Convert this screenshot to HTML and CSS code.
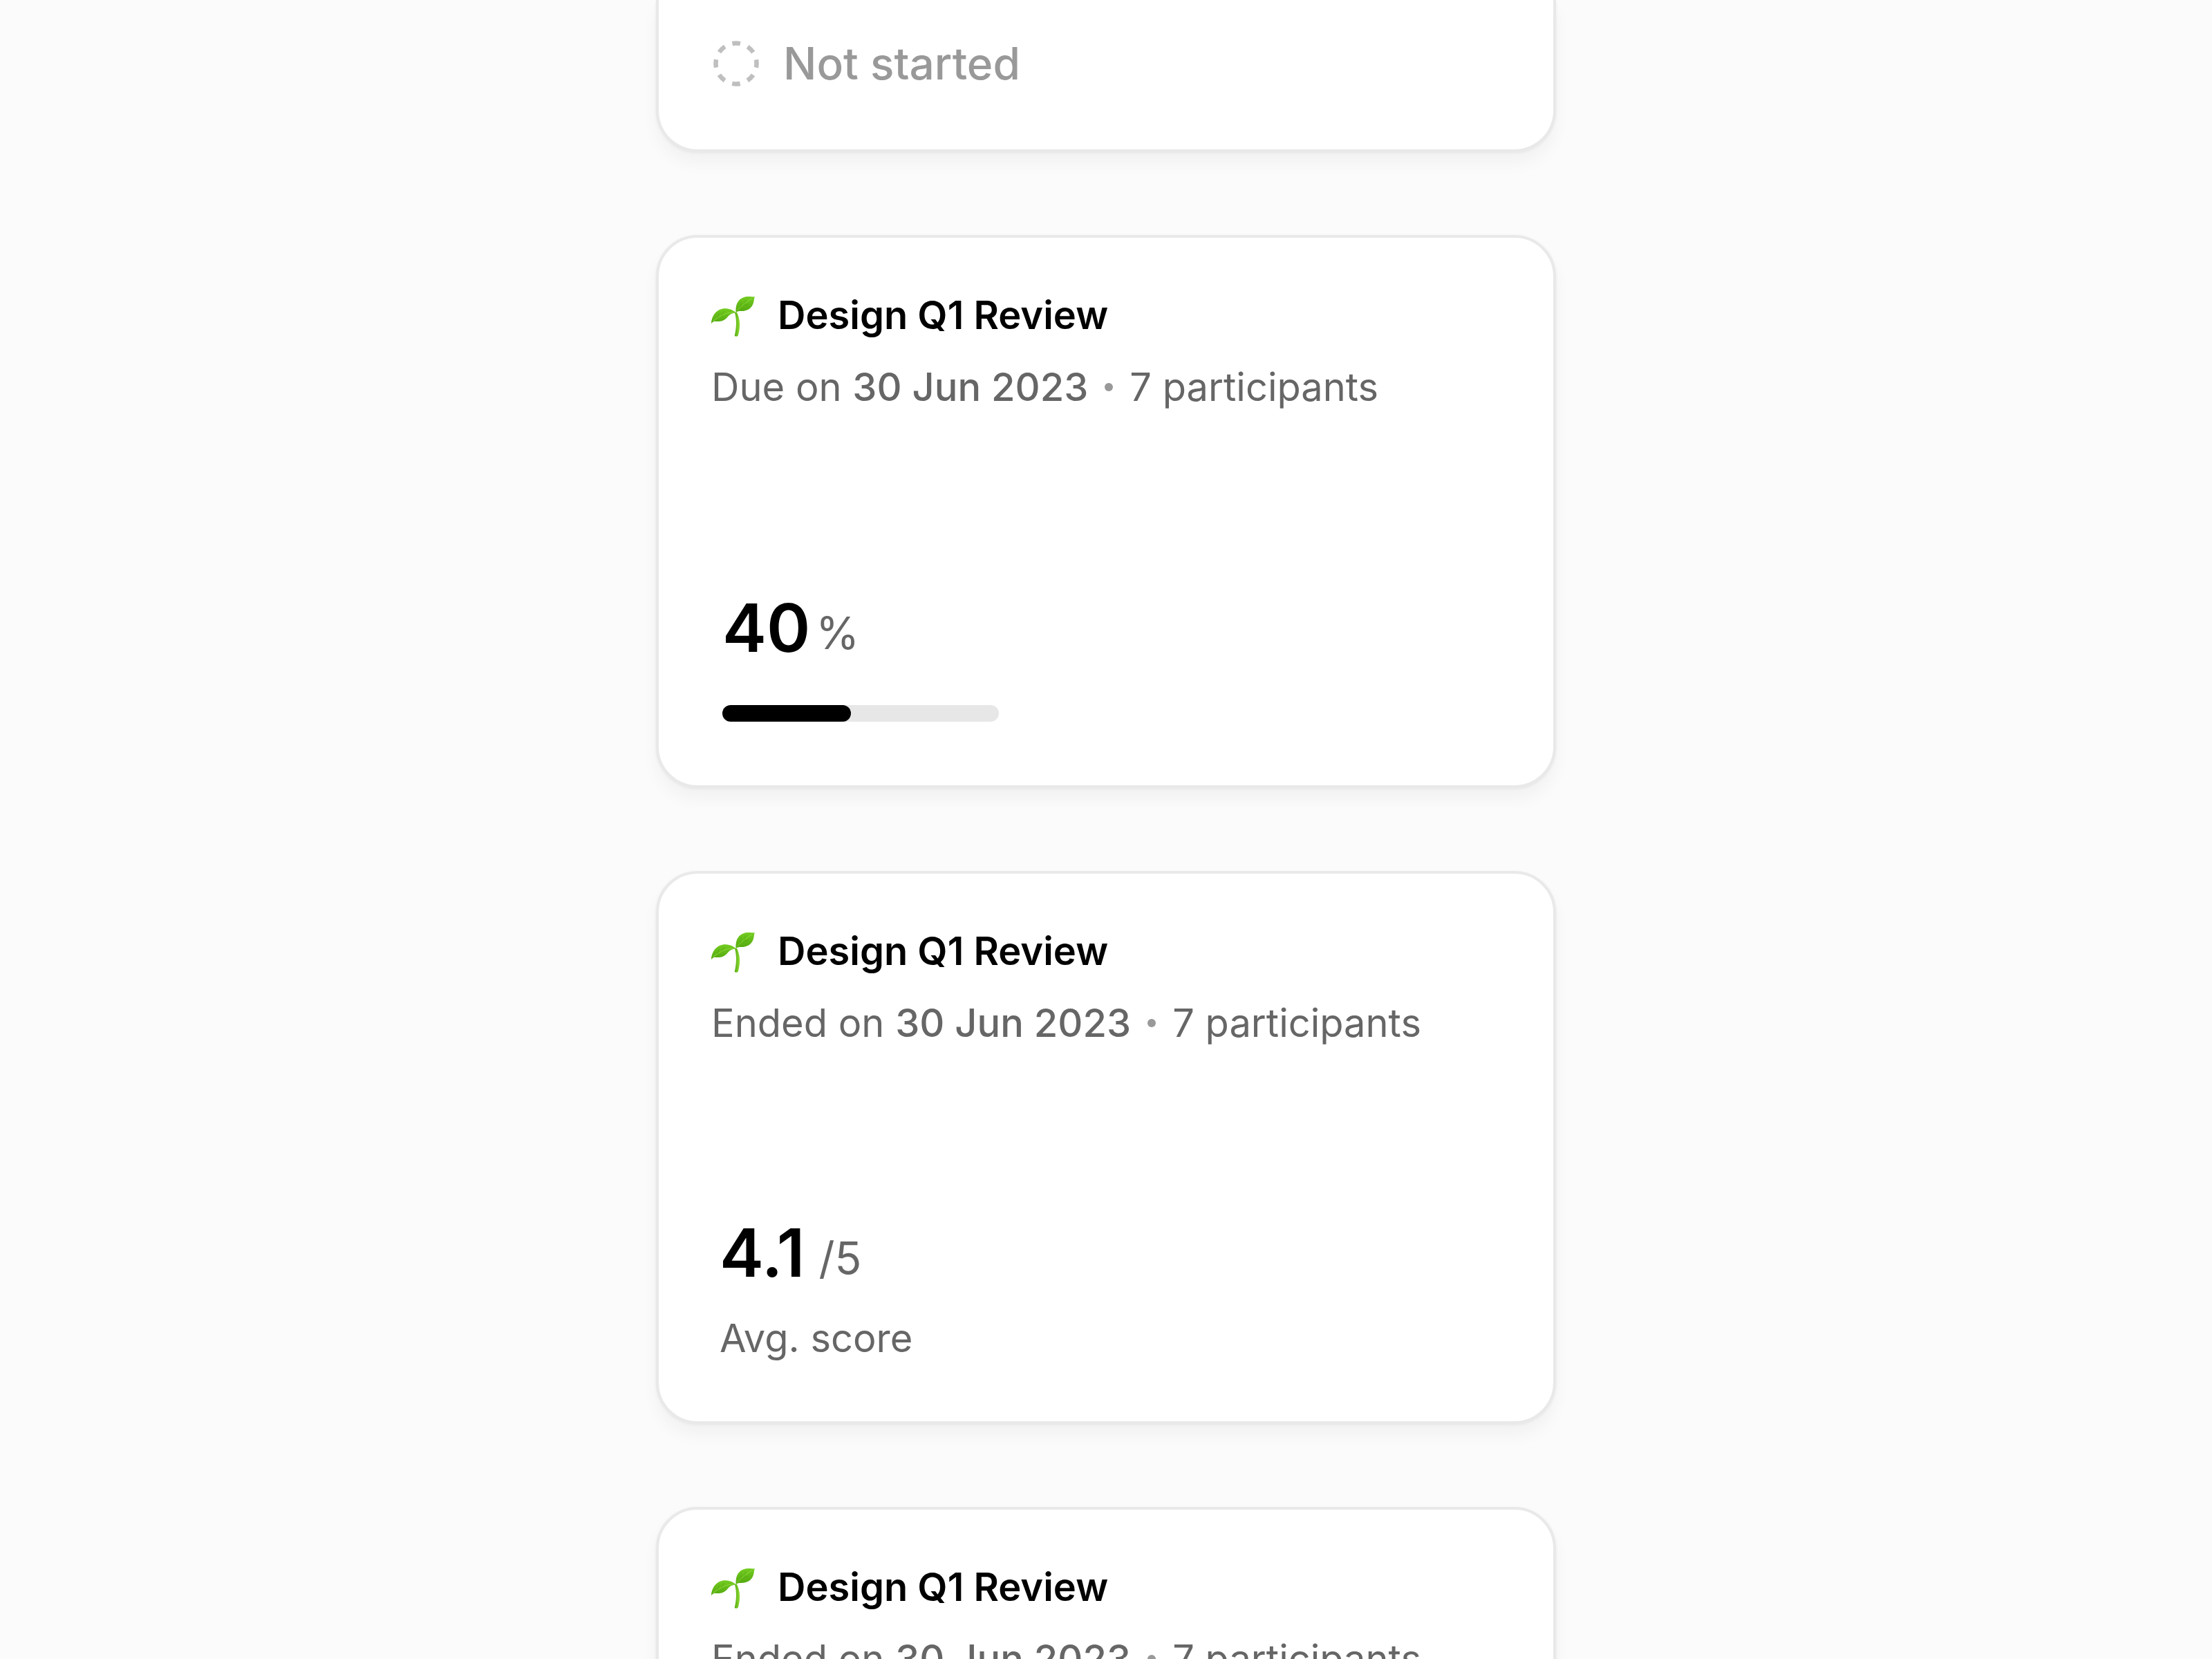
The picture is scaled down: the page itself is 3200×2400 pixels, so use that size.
FILE: index.html
```html
<!DOCTYPE html>
<html lang="en">
<head>
    <meta charset="UTF-8" />
    <meta name="viewport" content="width=device-width, initial-scale=1" />
    <title>Reviews</title>
    <link rel="stylesheet" href="styles.css">
</head>
<body>
    <!-- shared sprout icon -->
    <svg class="sprite" aria-hidden="true">
        <defs>
            <linearGradient id="leaf" x1="0" y1="0" x2="0" y2="1">
                <stop offset="0" stop-color="#74cc22" />
                <stop offset="1" stop-color="#52a80e" />
            </linearGradient>
            <linearGradient id="stem" x1="0" y1="0" x2="1" y2="0">
                <stop offset="0" stop-color="#55a810" />
                <stop offset="1" stop-color="#8fdd34" />
            </linearGradient>
        </defs>
        <symbol id="sprout" viewBox="84 88 192 178">
            <path d="M186 160L195 158C203 176 209 196 207 222C206 238 203 250 200 260Q193 266 185 261C192 232 196 196 186 160Z" fill="url(#stem)" />
            <path d="M84 207C86 168 112 141 146 142C166 143 182 151 192 161C174 160 164 167 154 179C138 198 118 200 98 197C92 199 88 202 84 207Z" fill="url(#leaf)" />
            <path d="M191 159C187 112 212 90 246 90C257 90 265 92 273 91C269 97 270 105 268 113C262 141 240 153 214 153C204 153 197 154 191 159Z" fill="url(#leaf)" />
            <path d="M92 195C112 184 134 160 182 158M196 150C212 134 234 114 262 98" fill="none" stroke="#8fdc3c" stroke-width="3" />
            <path d="M112 182L118 160M130 172L140 152M212 136L214 112M228 122L234 102M222 128L246 124" fill="none" stroke="#3f8f0a" stroke-width="2" opacity=".5" />
        </symbol>
    </svg>

    <main class="list">
        <section class="card card-first">
            <p class="status">
                <svg class="status-icon" viewBox="0 0 72 72" aria-hidden="true">
                    <circle cx="36" cy="36" r="29.5" fill="none" stroke="#bfbfbf" stroke-width="6.5" stroke-dasharray="11.58 11.58" stroke-dashoffset="5.79" />
                </svg>
                Not started
            </p>
        </section>

        <section class="card">
            <h2 class="title"><svg class="sprout" aria-hidden="true"><use href="#sprout" /></svg>Design Q1 Review</h2>
            <p class="meta"><span>Due on <b>30 Jun 2023</b></span><i class="dot"></i><span>7 participants</span></p>
            <div class="result progress">
                <p class="score">40<span class="unit">%</span></p>
                <div class="bar" role="progressbar" aria-label="Progress" aria-valuenow="40" aria-valuemin="0" aria-valuemax="100"><div class="fill"></div></div>
            </div>
        </section>

        <section class="card">
            <h2 class="title"><svg class="sprout" aria-hidden="true"><use href="#sprout" /></svg>Design Q1 Review</h2>
            <p class="meta"><span>Ended on <b>30 Jun 2023</b></span><i class="dot"></i><span>7 participants</span></p>
            <div class="result">
                <p class="score">4.1<span class="unit">/5</span></p>
                <p class="caption">Avg. score</p>
            </div>
        </section>

        <section class="card">
            <h2 class="title"><svg class="sprout" aria-hidden="true"><use href="#sprout" /></svg>Design Q1 Review</h2>
            <p class="meta"><span>Ended on <b>30 Jun 2023</b></span><i class="dot"></i><span>7 participants</span></p>
        </section>
    </main>
</body>
</html>
```
FILE: styles.css
```css
*{margin: 0;padding: 0;box-sizing: border-box;}
html,body{height: 100%;}
body{
    background:#fbfbfb;
    color:#000;
    font-family:Inter,"Liberation Sans",sans-serif;
    font-size:56px;
    line-height:72px;
    overflow:hidden;
}
.sprite{position:absolute;width:0;height:0;}

.list{
    display:flex;
    flex-direction:column;
    align-items:center;
    gap:120px;
}
.card{
    display:flex;
    flex-direction:column;
    flex-shrink:0;
    width:100%;
    max-width:1302px;
    min-height:800px;
    padding:76px;
    background:#fff;
    border:4px solid #e9e9e9;
    border-radius:60px;
    box-shadow:0 1px 4px rgba(0,0,0,.06),0 16px 24px rgba(0,0,0,.04);
}
.card-first{
    min-height:0;
    padding-top:56px;
    padding-bottom:88px;
    border-top:0;
    border-radius:0 0 60px 60px;
}

.status{
    display:flex;
    align-items:center;
    gap:32px;
    color:#999;
    font-size:64px;
    font-weight:500;
}
.status-icon{width:72px;height:72px;}

.title{
    display:flex;
    align-items:center;
    gap:32px;
    font-size:56px;
    font-weight:600;
}
.sprout{width:64px;height:60px;margin-top:4px;}
.meta{
    display:flex;
    align-items:center;
    gap:24px;
    margin-top:32px;
    color:#666;
}
.meta b{font-weight:500;}
.dot{width:12px;height:12px;border-radius:50%;background:#999;}

.result{margin-top:auto;padding-left:12px;}
.score{
    display:flex;
    align-items:flex-end;
    gap:20px;
    font-size:96px;
    font-weight:600;
    line-height:120px;
}
.unit{
    color:#666;
    font-size:64px;
    font-weight:400;
    line-height:104px;
}
.caption{margin:28px 0 8px;color:#666;}

.progress{padding-left:16px;}
.progress .score{gap:8px;}
.bar{
    width:400px;
    height:24px;
    margin:52px 0 16px;
    border-radius:12px;
    background:#e7e7e7;
}
.fill{width:186px;height:24px;border-radius:12px;background:#000;}
```
